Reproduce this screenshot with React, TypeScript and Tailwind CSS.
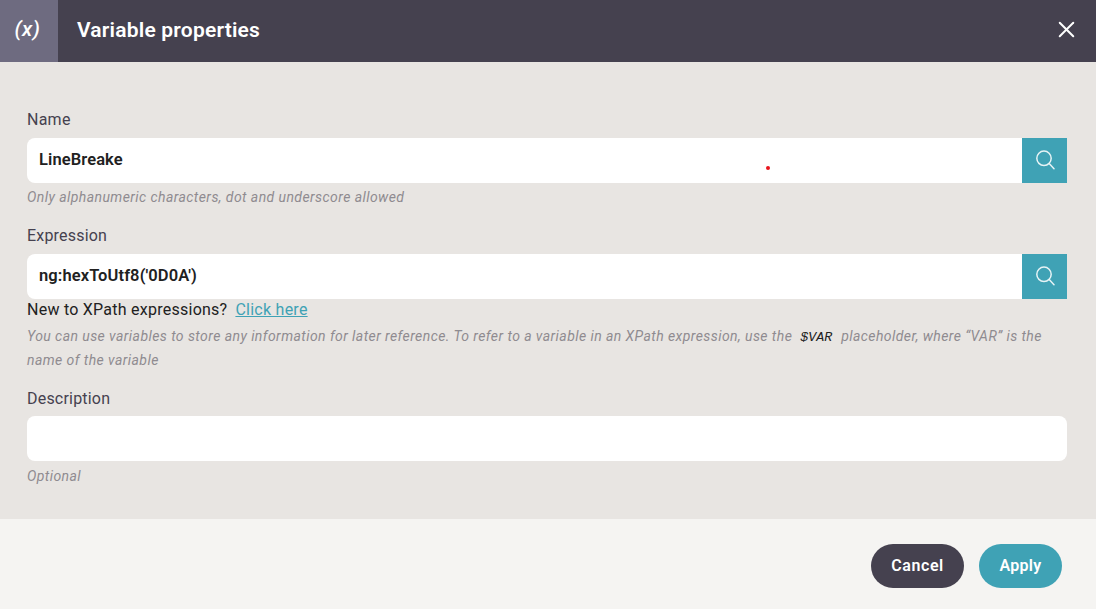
import { X } from 'lucide-react'

function SearchIcon() {
  return (
    <svg width="21" height="21" viewBox="0 0 21 21" fill="none" stroke="currentColor" strokeWidth="1.5" strokeLinecap="round">
      <circle cx="10" cy="8.3" r="7.2" />
      <path d="M15.2 13.5 20 18.7" />
    </svg>
  )
}

function SearchField({ value }: { value: string }) {
  return (
    <div className="flex h-[45px] overflow-hidden rounded-l-lg bg-white">
      <div className="flex-1 pl-3 text-[16.5px] leading-[44px] font-semibold tracking-[0.1px] text-[#212121]">{value}</div>
      <button className="flex h-[45px] w-[45px] items-center justify-center bg-[#3fa2b5] text-[#e6f3f5]">
        <SearchIcon />
      </button>
    </div>
  )
}

export default function App() {
  return (
    <div className="relative flex h-[609px] w-[1096px] flex-col overflow-hidden bg-[#e8e5e2] font-['Roboto',sans-serif]">
      <header className="flex h-[62px] items-center bg-[#45414f] text-white">
        <div className="flex h-[62px] w-[58px] items-center justify-center bg-[#6e6b80] pr-[3px] pb-[3px] text-[21px] font-medium tracking-[0.5px] italic">
          (x)
        </div>
        <h1 className="ml-[19px] flex-1 text-[21px] font-semibold tracking-[0.2px]">Variable properties</h1>
        <button className="mr-[20px] mb-1 flex h-5 w-5 items-center justify-center text-white">
          <X size={27} strokeWidth={1.8} className="shrink-0" />
        </button>
      </header>

      <main className="flex-1 px-[27px] pt-[46px] pr-[29px]">
        <label className="block text-[16px] leading-[24px] tracking-[0.25px] text-[#45414f]">Name</label>
        <div className="mt-[6px]">
          <SearchField value="LineBreake" />
        </div>
        <p className="mt-[3px] text-[14px] leading-[22px] tracking-[0.43px] text-[#8f8b90] italic">
          Only alphanumeric characters, dot and underscore allowed
        </p>

        <label className="mt-[16px] block text-[16px] leading-[24px] tracking-[0.2px] text-[#45414f]">Expression</label>
        <div className="mt-[6px]">
          <SearchField value="ng:hexToUtf8('0D0A')" />
        </div>
        <p className="text-[16px] leading-[21px] tracking-[0.25px] text-[#212121]">
          New to XPath expressions?
          <a className="ml-[8px] text-[#3fa2b5] underline">Click here</a>
        </p>
        <p className="mt-[4px] text-[14px] leading-[24px] tracking-[0.43px] text-[#8f8b90] italic">
          You can use variables to store any information for later reference. To refer to a variable in an XPath expression, use the
          <code className="mr-[9px] ml-2 font-['Liberation_Mono',monospace] text-[13.3px] leading-none tracking-normal text-[#212121] italic">$VAR</code>
          placeholder, where “VAR” is the name of the variable
        </p>

        <label className="mt-[15px] block text-[16px] leading-[24px] tracking-[0.2px] text-[#45414f]">Description</label>
        <div className="mt-[5px] h-[45px] rounded-lg bg-white" />
        <p className="mt-[4px] text-[14px] leading-[22px] tracking-[0.43px] text-[#8f8b90] italic">Optional</p>
      </main>

      <footer className="flex h-[90px] items-start justify-end gap-[15px] bg-[#f5f4f2] pt-[25px] pr-[34px]">
        <button className="h-[44px] w-[93px] rounded-full bg-[#45414f] text-[16px] font-semibold tracking-[0.6px] text-white">Cancel</button>
        <button className="h-[44px] w-[83px] rounded-full bg-[#3fa2b5] text-[16px] font-semibold tracking-[0.3px] text-white">Apply</button>
      </footer>

      <span className="absolute top-[166px] left-[766px] h-[4px] w-[4px] rounded-full bg-[#e8141c]" />
    </div>
  )
}
